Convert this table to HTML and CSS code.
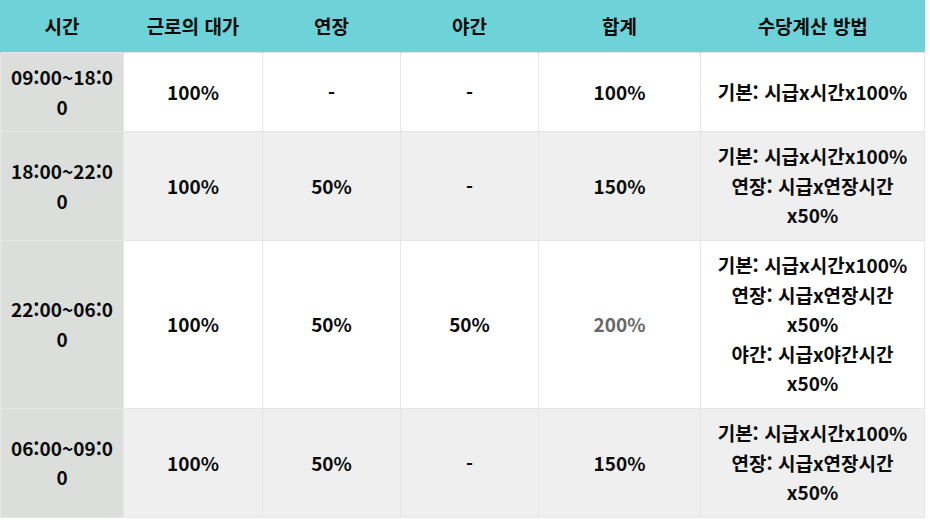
FILE: index.html
```html
<!DOCTYPE html>
<html lang="ko">
<head>
<meta charset="utf-8">
<link rel="stylesheet" href="styles.css">
</head>
<body>
<table class="pay">
  <colgroup>
    <col class="c1"><col class="c2"><col class="c3"><col class="c4"><col class="c5"><col class="c6">
  </colgroup>
  <thead>
    <tr><th>시간</th><th>근로의 대가</th><th>연장</th><th>야간</th><th>합계</th><th>수당계산 방법</th></tr>
  </thead>
  <tbody>
    <tr class="odd">
      <td class="time">09:00~18:00</td><td>100%</td><td>-</td><td>-</td><td>100%</td><td>기본: 시급x시간x100%</td>
    </tr>
    <tr class="even">
      <td class="time">18:00~22:00</td><td>100%</td><td>50%</td><td>-</td><td>150%</td><td>기본: 시급x시간x100%<br>연장: 시급x연장시간x50%</td>
    </tr>
    <tr class="odd">
      <td class="time">22:00~06:00</td><td>100%</td><td>50%</td><td>50%</td><td class="muted">200%</td><td>기본: 시급x시간x100%<br>연장: 시급x연장시간x50%<br>야간: 시급x야간시간x50%</td>
    </tr>
    <tr class="even">
      <td class="time">06:00~09:00</td><td>100%</td><td>50%</td><td>-</td><td>150%</td><td>기본: 시급x시간x100%<br>연장: 시급x연장시간x50%</td>
    </tr>
  </tbody>
</table>
</body>
</html>
```
FILE: styles.css
```css
html, body {
  margin: 0;
  padding: 0;
  background: #ffffff;
}
.pay {
  width: 924px;
  border-collapse: collapse;
  table-layout: fixed;
  font-family: "Noto Sans CJK KR", "Noto Sans", sans-serif;
  font-weight: 700;
  font-size: 19px;
  line-height: 29.6px;
  color: #0a0a0a;
}
.c1 { width: 123px; }
.c2 { width: 139px; }
.c3 { width: 138px; }
.c4 { width: 138px; }
.c5 { width: 162px; }
.c6 { width: 224px; }
.pay th {
  background: #6dd3d8;
  height: 52px;
  padding: 0 8px;
  text-align: center;
  vertical-align: middle;
  font-weight: 700;
  border-left: 1px solid #6dd3d8;
}
.pay td {
  padding: 9px 8px 10px;
  text-align: center;
  vertical-align: middle;
  border: 1px solid #e6e6e6;
  overflow-wrap: anywhere;
}
.pay tr.odd td { background: #ffffff; }
.pay tr.even td { background: #efefef; }
.pay td.time {
  background: #dcdedc !important;
  padding: 9px 9px 10px;
  border-color: #e6e6e6;
}
.pay td.muted { color: #666666; }
```
